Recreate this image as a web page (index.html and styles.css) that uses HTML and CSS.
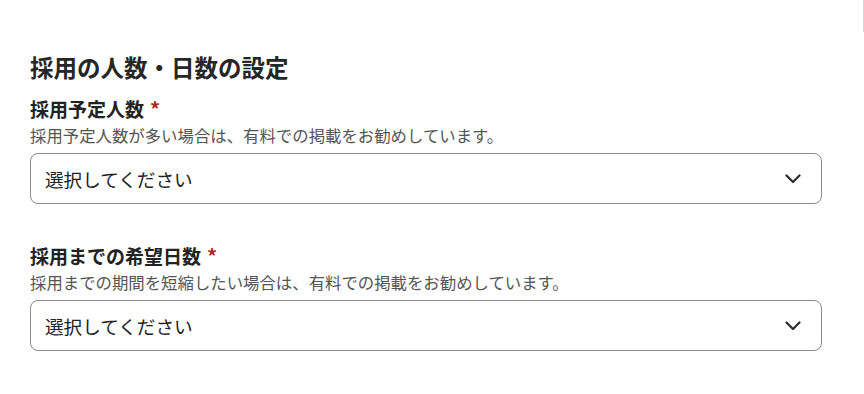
FILE: index.html
```html
<!DOCTYPE html>
<html lang="ja">

<head>
    <meta charset="UTF-8">
    <meta name="viewport" content="width=device-width, initial-scale=1.0">
    <title>採用の人数・日数の設定</title>
    <link rel="stylesheet" href="styles.css">
</head>

<body>
    <div class="edge"></div>
    <div class="settings">
        <h2 class="title">採用の人数・日数の設定</h2>

        <div class="field">
            <label class="label" for="count">採用予定人数<span class="req">*</span></label>
            <p class="hint">採用予定人数が多い場合は、有料での掲載をお勧めしています。</p>
            <div class="select-wrap">
                <select id="count" class="select">
                    <option>選択してください</option>
                </select>
                <svg class="chevron" width="16" height="10" viewBox="0 0 16 10">
                    <path d="M1.5 1.5 L8 8 L14.5 1.5" fill="none" stroke="#2b2b2b" stroke-width="2.2" stroke-linecap="round" stroke-linejoin="round" />
                </svg>
            </div>
        </div>

        <div class="field">
            <label class="label" for="days">採用までの希望日数<span class="req">*</span></label>
            <p class="hint">採用までの期間を短縮したい場合は、有料での掲載をお勧めしています。</p>
            <div class="select-wrap">
                <select id="days" class="select">
                    <option>選択してください</option>
                </select>
                <svg class="chevron" width="16" height="10" viewBox="0 0 16 10">
                    <path d="M1.5 1.5 L8 8 L14.5 1.5" fill="none" stroke="#2b2b2b" stroke-width="2.2" stroke-linecap="round" stroke-linejoin="round" />
                </svg>
            </div>
        </div>
    </div>
</body>

</html>
```

FILE: styles.css
```css
* {
    box-sizing: border-box;
}

body {
    margin: 0;
    background: #fff;
    color: #222;
    font-family: "Noto Sans CJK JP", "Noto Sans", sans-serif;
}

.edge {
    position: absolute;
    top: 0;
    right: 0;
    width: 1px;
    height: 32px;
    background: #d6d6d6;
}

.settings {
    width: 822px;
    padding: 49px 0 0 30px;
}

.title {
    margin: 0 0 10px;
    font-size: 23.5px;
    line-height: 36px;
    font-weight: 700;
    color: #262626;
}

.field {
    margin-bottom: 38px;
}

.label {
    display: block;
    font-size: 19px;
    line-height: 27px;
    font-weight: 700;
    color: #222;
}

.req {
    color: #b3261e;
    margin-left: 6px;
    font-size: 20px;
}

.hint {
    margin: 0 0 5px;
    font-size: 16.4px;
    line-height: 26px;
    color: #555;
}

.select-wrap {
    position: relative;
}

.select {
    appearance: none;
    -webkit-appearance: none;
    width: 100%;
    height: 51px;
    padding: 0 50px 0 14px;
    border: 1px solid #8a8a8a;
    border-radius: 8px;
    background: #fff;
    color: #222;
    font-family: inherit;
    font-size: 18.6px;
}

.chevron {
    position: absolute;
    right: 21px;
    top: 21px;
    pointer-events: none;
}
```
